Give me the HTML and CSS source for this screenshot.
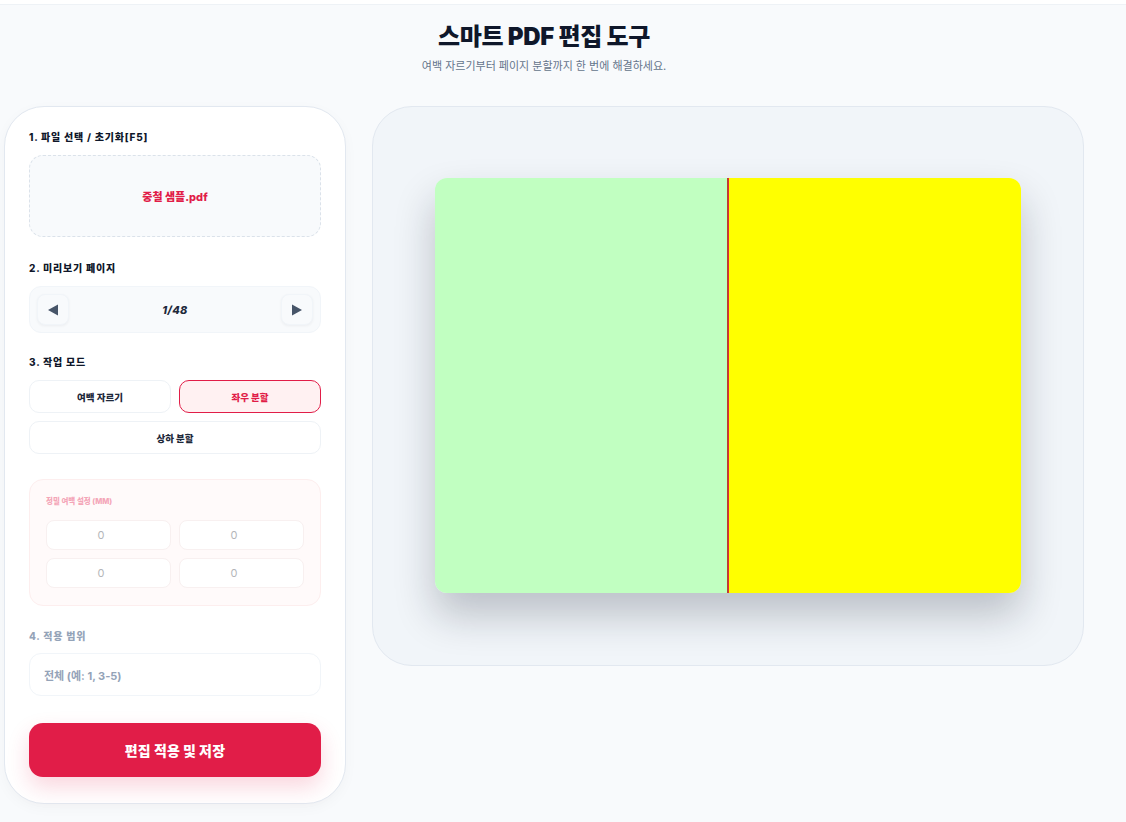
FILE: index.html
```html
<!DOCTYPE html>
<html lang="ko">
<head>
<meta charset="utf-8">
<title>스마트 PDF 편집 도구</title>
<link rel="stylesheet" href="styles.css">
</head>
<body>
<div class="topbar"></div>
<div class="page">
  <header class="hero">
    <h1 class="title">스마트 PDF 편집 도구</h1>
    <p class="subtitle">여백 자르기부터 페이지 분할까지 한 번에 해결하세요.</p>
  </header>
  <main class="layout">
    <aside class="panel">
      <section class="group">
        <div class="label">1. 파일 선택 / 초기화[F5]</div>
        <div class="dropzone">중철 샘플.pdf</div>
      </section>
      <section class="group">
        <div class="label">2. 미리보기 페이지</div>
        <div class="pager">
          <button class="nav-btn"><svg width="12" height="12" viewBox="0 0 12 12"><path d="M1 6 L11 0.5 L11 11.5 Z" fill="#475569"/></svg></button>
          <span class="page-num">1/48</span>
          <button class="nav-btn"><svg width="12" height="12" viewBox="0 0 12 12"><path d="M11 6 L1 0.5 L1 11.5 Z" fill="#475569"/></svg></button>
        </div>
      </section>
      <section class="group">
        <div class="label">3. 작업 모드</div>
        <div class="modes">
          <button class="mode">여백 자르기</button>
          <button class="mode active">좌우 분할</button>
          <button class="mode wide">상하 분할</button>
        </div>
      </section>
      <section class="margins">
        <div class="margins-label">정밀 여백 설정 (MM)</div>
        <div class="margin-grid">
          <div class="margin-input">0</div>
          <div class="margin-input">0</div>
          <div class="margin-input">0</div>
          <div class="margin-input">0</div>
        </div>
      </section>
      <section class="group">
        <div class="label muted">4. 적용 범위</div>
        <div class="range-input">전체 (예: 1, 3-5)</div>
      </section>
      <button class="submit">편집 적용 및 저장</button>
    </aside>
    <section class="preview">
      <div class="sheet">
        <div class="half left"></div>
        <div class="divider"></div>
        <div class="half right"></div>
      </div>
    </section>
  </main>
</div>
</body>
</html>
```

FILE: styles.css
```css
* { box-sizing: border-box; }
html, body { margin: 0; padding: 0; }
body {
  background: #f8fafc;
  font-family: "Inter", "Noto Sans CJK KR", "Noto Sans", sans-serif;
  color: #0f172a;
  height: 822px;
  overflow: hidden;
}
button { font-family: inherit; cursor: pointer; }
.topbar {
  height: 5px;
  background: #ffffff;
  border-bottom: 1px solid #eef2f6;
}
.page {
  width: 1080px;
  margin-left: 4px;
}
.hero {
  text-align: center;
  padding-top: 16px;
  height: 101px;
}
.title {
  margin: 0;
  font-size: 24px;
  font-weight: 900;
  line-height: 32px;
  letter-spacing: -0.3px;
  color: #0f172a;
}
.subtitle {
  margin: 6px 0 0;
  font-size: 11px;
  line-height: 14px;
  color: #64748b;
}
.layout {
  display: grid;
  grid-template-columns: 342px 712px;
  gap: 26px;
  align-items: start;
}
.panel {
  background: #ffffff;
  border: 1px solid #e2e8f0;
  border-radius: 40px;
  padding: 23px 24px 26px;
  display: flex;
  flex-direction: column;
  height: 698px;
  box-shadow: 0 4px 14px rgba(15, 23, 42, 0.03);
}
.group { display: flex; flex-direction: column; }
.label {
  font-size: 10px;
  font-weight: 800;
  line-height: 14px;
  letter-spacing: 0.8px;
  color: #0f172a;
  margin-bottom: 11px;
}
.label.muted { color: #94a3b8; margin-bottom: 10px; }
.dropzone {
  height: 82px;
  border: 1px dashed #dbe2ea;
  border-radius: 14px;
  background: #f8fafc;
  display: flex;
  align-items: center;
  justify-content: center;
  color: #e11d48;
  font-size: 11px;
  font-weight: 800;
  margin-bottom: 24px;
}
.pager {
  height: 47px;
  background: #f8fafc;
  border: 1px solid #f1f5f9;
  border-radius: 12px;
  display: flex;
  align-items: center;
  justify-content: space-between;
  padding: 0 7px;
  margin-bottom: 22px;
}
.nav-btn {
  width: 32px;
  height: 31px;
  border: 1px solid #f1f5f9;
  border-radius: 8px;
  background: #f8fafc;
  box-shadow: 0 1px 3px rgba(15, 23, 42, 0.05);
  display: flex;
  align-items: center;
  justify-content: center;
  padding: 0;
}
.page-num {
  font-size: 11px;
  font-weight: 800;
  font-style: italic;
  color: #1e293b;
  letter-spacing: 0.3px;
}
.modes {
  display: grid;
  grid-template-columns: 1fr 1fr;
  gap: 8px;
  margin-bottom: 25px;
}
.mode {
  height: 33px;
  border: 1px solid #eef2f6;
  border-radius: 10px;
  background: #ffffff;
  color: #1e293b;
  font-size: 9.5px;
  font-weight: 800;
  padding: 0;
}
.mode.wide { grid-column: 1 / 3; }
.mode.active {
  background: #fff1f2;
  border: 1.5px solid #e11d48;
  color: #e11d48;
}
.margins {
  background: #fffafa;
  border: 1px solid #fdeeee;
  border-radius: 14px;
  padding: 16px 16px 17px;
  margin-bottom: 23px;
}
.margins-label {
  font-size: 7.5px;
  font-weight: 800;
  color: #f4a6b8;
  line-height: 12px;
  margin-bottom: 12px;
}
.margin-grid {
  display: grid;
  grid-template-columns: 1fr 1fr;
  gap: 8px 8px;
}
.margin-input {
  height: 30px;
  background: #ffffff;
  border: 1px solid #f8f0f0;
  border-radius: 8px;
  display: flex;
  align-items: center;
  justify-content: center;
  padding-right: 15px;
  color: #b4b6b9;
  font-size: 11px;
}
.range-input {
  height: 43px;
  border: 1px solid #f1f5f9;
  border-radius: 12px;
  background: #ffffff;
  display: flex;
  align-items: center;
  padding: 0 14px;
  color: #94a3b8;
  font-size: 11px;
  font-weight: 700;
}
.submit {
  margin-top: 27px;
  height: 54px;
  border: none;
  border-radius: 14px;
  background: #e11d48;
  color: #ffffff;
  font-size: 14px;
  font-weight: 900;
  letter-spacing: 0.2px;
  box-shadow: 0 10px 22px rgba(225, 29, 72, 0.18);
}
.preview {
  height: 560px;
  background: #f1f5f9;
  border: 1px solid #e2e8f0;
  border-radius: 40px;
  display: flex;
  align-items: center;
  justify-content: center;
}
.sheet {
  width: 586px;
  height: 415px;
  margin-bottom: 1px;
  border-radius: 12px;
  overflow: hidden;
  display: flex;
  box-shadow: 0 22px 40px rgba(15, 23, 42, 0.24);
}
.half { flex: 1; }
.half.left { background: #c1ffc1; }
.half.right { background: #ffff00; }
.divider {
  width: 2px;
  background: #d92d3a;
  border-left: 1px solid #b5472c;
}
```
